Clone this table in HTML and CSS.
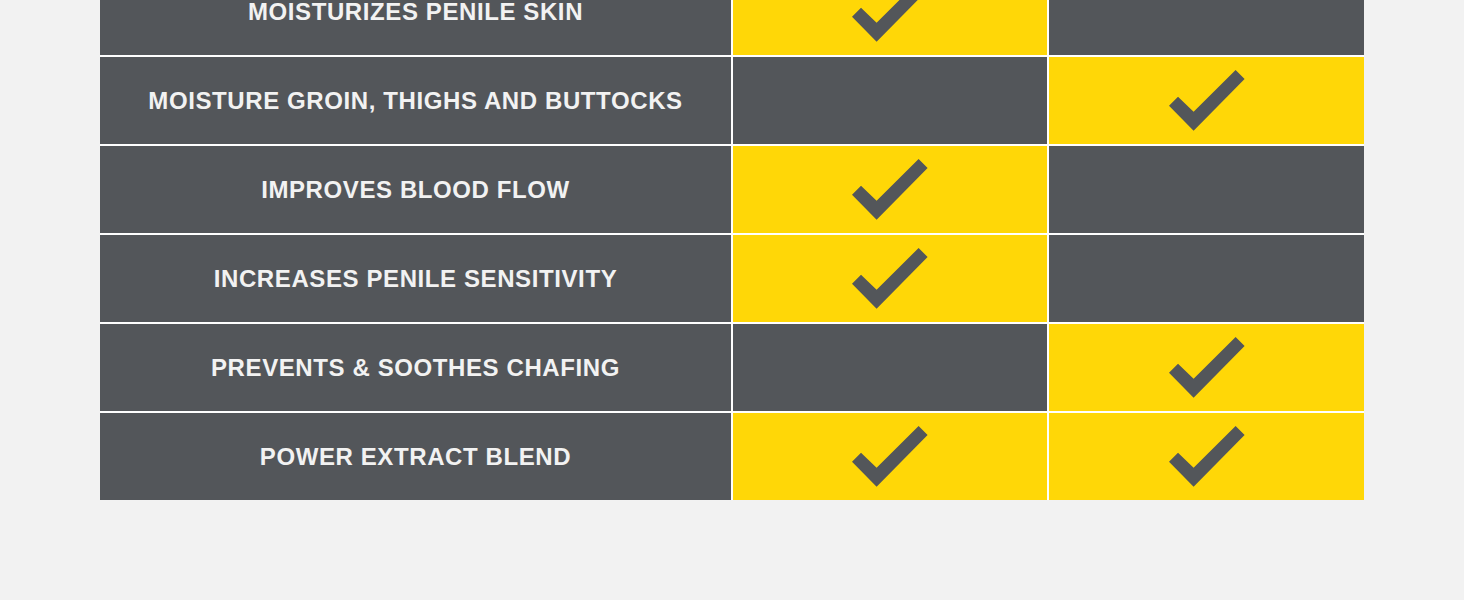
FILE: index.html
```html
<!DOCTYPE html>
<html>
<head>
<meta charset="utf-8">
<link rel="stylesheet" href="styles.css">
</head>
<body>
<svg width="0" height="0" class="defs">
  <defs>
    <symbol id="check" viewBox="0 0 76 61">
      <polygon points="0,35.7 9,26.7 24.6,41.7 66.6,0 75.6,9 24.6,60.7" fill="#53565a"/>
    </symbol>
  </defs>
</svg>
<div class="table">
  <div class="label">MOISTURIZES PENILE SKIN</div>
  <div class="cell yes"><svg class="check"><use href="#check"/></svg></div>
  <div class="cell"></div>

  <div class="label">MOISTURE GROIN, THIGHS AND BUTTOCKS</div>
  <div class="cell"></div>
  <div class="cell yes"><svg class="check"><use href="#check"/></svg></div>

  <div class="label">IMPROVES BLOOD FLOW</div>
  <div class="cell yes"><svg class="check"><use href="#check"/></svg></div>
  <div class="cell"></div>

  <div class="label">INCREASES PENILE SENSITIVITY</div>
  <div class="cell yes"><svg class="check"><use href="#check"/></svg></div>
  <div class="cell"></div>

  <div class="label">PREVENTS &amp; SOOTHES CHAFING</div>
  <div class="cell"></div>
  <div class="cell yes"><svg class="check"><use href="#check"/></svg></div>

  <div class="label">POWER EXTRACT BLEND</div>
  <div class="cell yes"><svg class="check"><use href="#check"/></svg></div>
  <div class="cell yes"><svg class="check"><use href="#check"/></svg></div>
</div>
</body>
</html>
```

FILE: styles.css
```css
html, body {
  margin: 0;
  padding: 0;
  background: #f2f2f2;
  overflow: hidden;
}
.defs {
  position: absolute;
  width: 0;
  height: 0;
}
.table {
  display: grid;
  grid-template-columns: 631px 314px 315px;
  grid-auto-rows: 87px;
  gap: 2px;
  width: 1264px;
  margin: -32px 0 0 100px;
  background: #ffffff;
}
.label, .cell {
  background: #53565a;
  display: flex;
  align-items: center;
  justify-content: center;
}
.label {
  color: #f2f2f2;
  font-family: "Liberation Sans", Arial, sans-serif;
  font-weight: bold;
  font-size: 24px;
  letter-spacing: 0.6px;
}
.cell.yes {
  background: #ffd707;
}
.check {
  width: 76px;
  height: 61px;
}
```
